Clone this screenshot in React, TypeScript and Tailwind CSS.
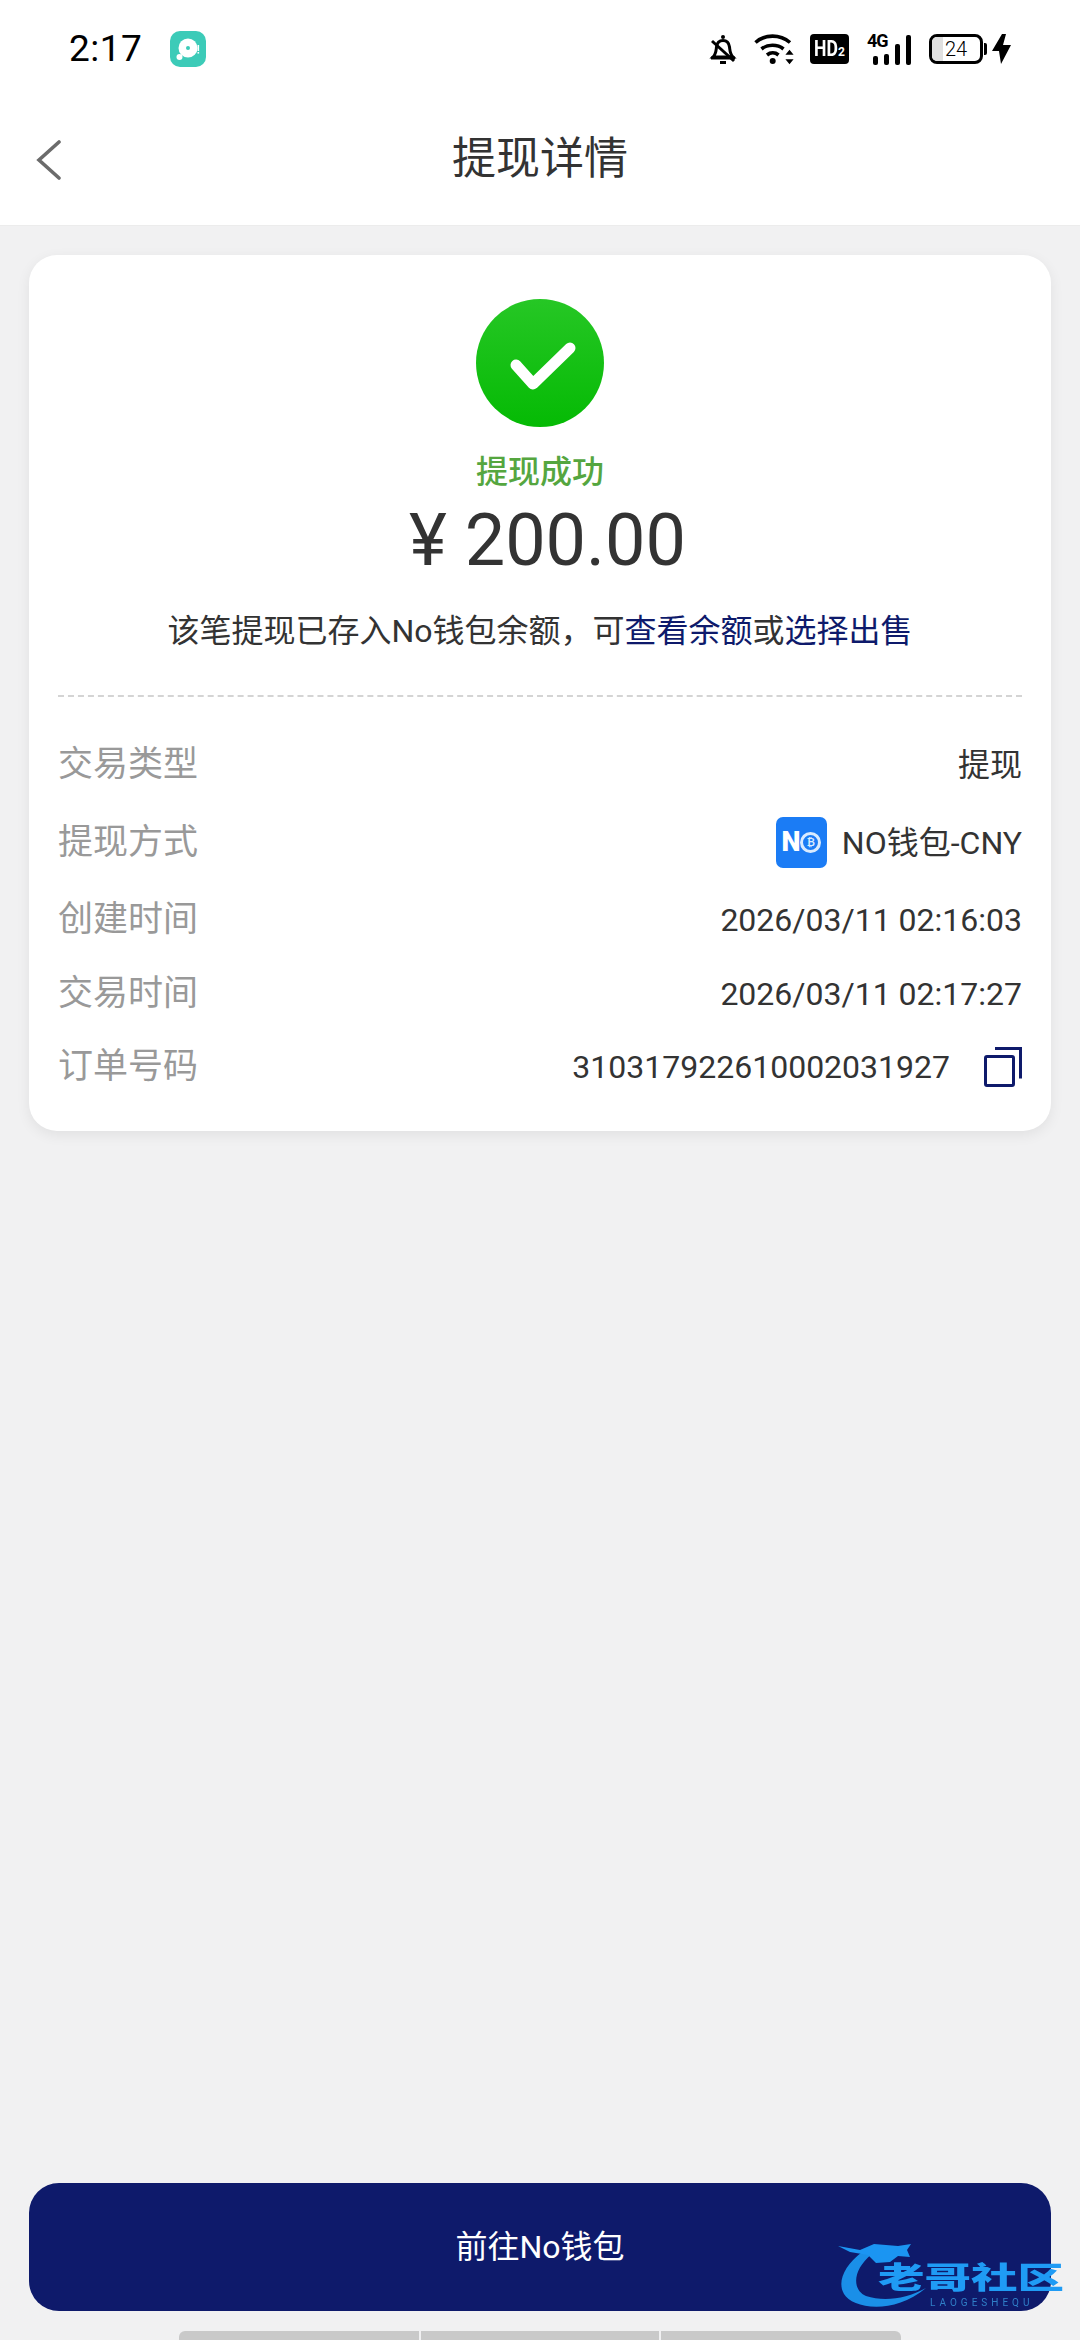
const cjk = "font-['Roboto','Noto_Sans_CJK_SC',sans-serif]";

const rows = [
  { label: "交易类型", value: "提现", h: "h-[77px]" },
  { label: "提现方式", value: "NO钱包-CNY", logo: true, h: "h-[79px]" },
  { label: "创建时间", value: "2026/03/11 02:16:03", h: "h-[75px]" },
  { label: "交易时间", value: "2026/03/11 02:17:27", h: "h-[73px]" },
  { label: "订单号码", value: "310317922610002031927", copy: true, h: "h-[73px]" },
];

function BellOff() {
  return (
    <svg width="28" height="32" viewBox="0 0 28 32" fill="none" stroke="#000" strokeWidth="3">
      <path d="M4 24c3-3 3-6 3.500-10 .5-4 3-6.500 6.500-6.500s6 2.500 6.500 6.500c.5 4 .5 7 3.500 10z" />
      <path d="M2 25h24" />
      <path d="M3 8l22 20" />
      <circle cx="14" cy="4" r="2" fill="#000" stroke="none" />
      <path d="M11 29.500h6" />
    </svg>
  );
}

function Wifi() {
  return (
    <svg width="42" height="32" viewBox="0 0 42 32" fill="none" stroke="#000" strokeWidth="3.600">
      <path d="M1.500 9.500C11 1 26 1 36 9.500" />
      <path d="M7.500 16c6-5 16-5 22 0" />
      <path d="M13 22c3.500-2.800 8-2.800 11.500 0" />
      <circle cx="18.700" cy="28" r="3" fill="#000" stroke="none" />
      <path d="M33 21l2.500-3 2.500 3zM33 27l2.500 3 2.500-3z" fill="#000" strokeWidth="1.500" />
    </svg>
  );
}

function Signal() {
  return (
    <div className="relative h-[32px] w-[44px]">
      <span className="absolute left-0 top-[-1px] text-[18px] leading-[18px] font-bold tracking-[-1px] text-black font-['Roboto',sans-serif]">4G</span>
      <div className="absolute bottom-0 left-[6px] flex items-end gap-[6px]">
        <span className="block h-[9px] w-[5px] rounded-[2px] bg-black" />
        <span className="block h-[11px] w-[5px] rounded-[2px] bg-black" />
        <span className="block h-[21px] w-[5px] rounded-[2px] bg-black" />
        <span className="block h-[30px] w-[5px] rounded-[2px] bg-black" />
      </div>
    </div>
  );
}

function Battery() {
  return (
    <div className="flex items-center">
      <div className="relative flex h-[30px] w-[54px] items-center justify-center overflow-hidden rounded-[8px] border-[3px] border-black">
        <div className="absolute inset-y-0 left-0 w-[11px] bg-[#e0e0e0]" />
        <span className="relative text-[20px] leading-none font-light text-black font-['Roboto',sans-serif]">24</span>
      </div>
      <span className="ml-[1px] block h-[12px] w-[3px] rounded-r-[2px] bg-black" />
    </div>
  );
}

function Bolt() {
  return (
    <svg width="20" height="30" viewBox="0 0 20 30" fill="#000">
      <path d="M10 0L0 17h7L9 30l10-19h-8l3-11z" />
    </svg>
  );
}

function StatusBar() {
  return (
    <div className="flex h-[96px] items-center pl-[69px] pr-[68px] pt-[1px]">
      <span className="text-[37px] leading-none tracking-[0.5px] text-black font-['Roboto',sans-serif]">2:17</span>
      <svg className="ml-[28px]" width="36" height="36" viewBox="0 0 36 36">
        <rect width="36" height="36" rx="10" fill="#3ccbb8" />
        <circle cx="18" cy="17" r="9.500" fill="#fff" />
        <circle cx="18" cy="17" r="2" fill="#3ccbb8" />
        <circle cx="9.500" cy="26" r="3" fill="#fff" />
        <rect x="27.500" y="14" width="1.600" height="6" fill="#fff" />
        <rect x="27.500" y="21" width="1.600" height="1.600" fill="#fff" />
      </svg>
      <div className="ml-auto flex items-center">
        <BellOff />
        <div className="ml-[17px]"><Wifi /></div>
        <div className="ml-[14px] flex h-[30px] w-[39px] items-center justify-center rounded-[4px] bg-black text-white font-['Roboto',sans-serif]">
          <span className="block w-[24px] origin-left scale-x-[0.8] text-[22px] leading-none font-bold">HD</span>
          <span className="mt-[6px] text-[12px] leading-none font-bold">2</span>
        </div>
        <div className="ml-[18px]"><Signal /></div>
        <div className="ml-[18px]"><Battery /></div>
        <div className="ml-[5px]"><Bolt /></div>
      </div>
    </div>
  );
}

function Header() {
  return (
    <div className="relative flex h-[130px] items-center justify-center border-b border-[#ececec] bg-white pb-[3px]">
      <svg className="absolute left-[36px] top-[44px]" width="26" height="40" viewBox="0 0 26 40" fill="none" stroke="#6b6b6b" strokeWidth="3.600" strokeLinecap="round">
        <path d="M23 2L3 20l20 18" />
      </svg>
      <h1 className="text-[44px] leading-none font-normal text-[#333]">提现详情</h1>
    </div>
  );
}

function NoLogo() {
  return (
    <div className="flex h-[51px] w-[51px] items-center justify-center rounded-[7px] bg-[#1b7cf5]">
      <span className="text-[27px] leading-none font-black tracking-[-1px] text-white font-['Roboto',sans-serif]">N</span>
      <span className="ml-[1px] flex h-[21px] w-[21px] items-center justify-center rounded-full border-[3px] border-[#d9ebff] text-[10px] leading-none font-bold text-[#d9ebff] font-['Roboto',sans-serif]">₿</span>
    </div>
  );
}

function CopyIcon() {
  return (
    <svg width="38" height="40" viewBox="0 0 38 40" fill="none" stroke="#0e1a6b" strokeWidth="3">
      <rect x="1.500" y="9.500" width="28" height="29" rx="1.500" />
      <path d="M11 1.500h25.500v30" />
    </svg>
  );
}

function Card() {
  return (
    <div className="mx-[29px] mt-[29px] h-[876px] rounded-[28px] bg-white px-[29px] pt-[44px] shadow-[0_4px_14px_rgba(0,0,0,0.07)]">
      <div className="flex flex-col items-center">
        <svg width="128" height="128" viewBox="0 0 128 128">
          <defs>
            <linearGradient id="ok" x1="0" y1="0" x2="0" y2="1">
              <stop offset="0" stopColor="#26c725" />
              <stop offset="1" stopColor="#05ba04" />
            </linearGradient>
          </defs>
          <circle cx="64" cy="64" r="64" fill="url(#ok)" />
          <path d="M40 66l17 19 37-36" fill="none" stroke="#fff" strokeWidth="11" strokeLinecap="round" strokeLinejoin="round" />
        </svg>
        <p className="mt-[27px] text-[32px] leading-[36px] font-medium text-[#55a63f]">提现成功</p>
        <p className="mt-[9px] ml-[15px] text-[72px] leading-[84px] text-[#333] font-['Roboto',sans-serif]">¥ 200.00</p>
        <p className="mt-[26px] text-[32px] leading-[44px] whitespace-nowrap text-[#333]">
          该笔提现已存入No钱包余额，可<span className="text-[#0e1a6b]">查看余额</span>或<span className="text-[#0e1a6b]">选择出售</span>
        </p>
      </div>
      <div className="mt-[42px] border-t-2 border-dashed border-[#d4d4d4]" />
      <div className="mt-[29px]">
        {rows.map((row) => (
          <div key={row.label} className={`flex items-center justify-between ${row.h}`}>
            <span className="text-[35px] leading-none text-[#999]">{row.label}</span>
            <div className="flex items-center">
              {row.logo && <div className="mr-[15px]"><NoLogo /></div>}
              <span className="text-[32px] leading-none text-[#333]">{row.value}</span>
              {row.copy && <div className="ml-[34px]"><CopyIcon /></div>}
            </div>
          </div>
        ))}
      </div>
    </div>
  );
}

function Watermark() {
  return (
    <div className="absolute left-[838px] top-[2238px] h-[74px] w-[225px] blur-[0.6px]">
      <svg className="absolute left-0 top-0" width="130" height="74" viewBox="0 0 130 74" fill="none">
        <path d="M24 14C6 28 -1 44 6 56c8 14 48 22 82-6-20 11-42 14-60 8-14-6-14-26 6-42z" fill="#1a8fe8" />
        <path d="M0 8l22 4 14-6 24 2 13-2-4 6 3 7-12-1-8 6-14 1-8-8-18-3z" fill="#1b95f2" />
      </svg>
      <span className="absolute left-[40px] top-[24px] block origin-left scale-x-[1.55] text-[30px] leading-[32px] font-black whitespace-nowrap text-[#1f9bf5]">老哥社区</span>
      <span className="absolute left-[92px] top-[59px] text-[10px] leading-[12px] tracking-[4px] whitespace-nowrap text-[#2f7fc8] font-['Roboto',sans-serif]">LAOGESHEQU</span>
    </div>
  );
}

export default function App() {
  return (
    <div className={`relative flex h-[2340px] w-[1080px] flex-col overflow-hidden bg-[#f1f1f2] ${cjk}`}>
      <div className="bg-white"><StatusBar /></div>
      <Header />
      <Card />
      <div className="mt-auto px-[29px]">
        <button className="flex h-[128px] w-[1022px] items-center justify-center rounded-[30px] bg-[#0e1a6b] text-[32px] text-white">
          前往No钱包
        </button>
      </div>
      <div className="mt-[20px] flex justify-center gap-[2px]">
        <span className="block h-[9px] w-[240px] rounded-tl-[6px] bg-[#c9c9c9]" />
        <span className="block h-[9px] w-[238px] bg-[#c9c9c9]" />
        <span className="block h-[9px] w-[240px] rounded-tr-[6px] bg-[#c9c9c9]" />
      </div>
      <Watermark />
    </div>
  );
}
